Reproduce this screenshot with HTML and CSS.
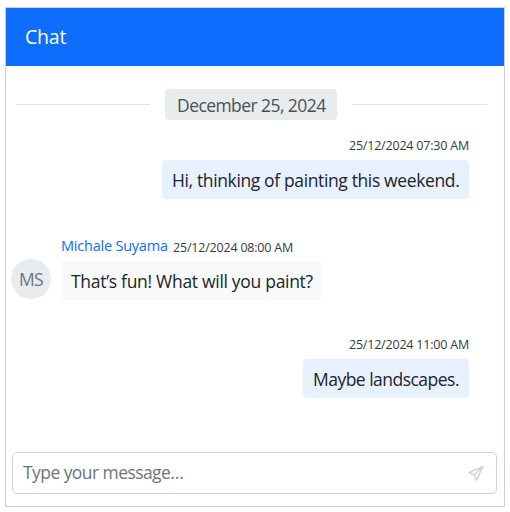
FILE: index.html
```html
<!DOCTYPE html>
<html lang="en">
<head>
<meta charset="utf-8">
<title>Chat</title>
<link rel="stylesheet" href="styles.css">
</head>
<body>
<main class="chat">
  <header class="chat-header"><span class="title">Chat</span></header>
  <section class="messages">
    <div class="date-divider"><span class="date"><span class="date-text">December 25, 2024</span></span></div>
    <article class="message sent">
      <div class="meta"><time class="time">25/12/2024 07:30 AM</time></div>
      <div class="bubble bubble-first"><span class="text-first">Hi, thinking of painting this weekend.</span></div>
    </article>
    <article class="message received">
      <div class="avatar"><span>MS</span></div>
      <div class="content">
        <div class="meta"><span class="name">Michale Suyama</span><time class="time">25/12/2024 08:00 AM</time></div>
        <div class="bubble bubble-reply"><span class="text-reply">That’s fun! What will you paint?</span></div>
      </div>
    </article>
    <article class="message sent">
      <div class="meta"><time class="time">25/12/2024 11:00 AM</time></div>
      <div class="bubble bubble-last"><span class="text-last">Maybe landscapes.</span></div>
    </article>
  </section>
  <footer class="composer">
    <span class="placeholder">Type your message…</span>
    <svg class="send" viewBox="0 0 16 16" width="16" height="16" fill="none" stroke="#ced2d7" stroke-width="1.4" stroke-linejoin="round"><path d="M15 1.5 1 7.7 6.2 9.9 8.6 15.2Z M6.2 9.9 15 1.5"/></svg>
  </footer>
</main>
</body>
</html>
```
FILE: styles.css
```css
* { box-sizing: border-box; }
body {
  margin: 0;
  padding: 7px 5px 5px;
  background: #fff;
  color: #212529;
  font-family: "Open Sans", "Noto Sans", sans-serif;
  font-size: 17.5px;
  line-height: 24px;
  white-space: nowrap;
}
.chat {
  display: flex;
  flex-direction: column;
  width: 500px;
  height: 500px;
  border: 1px solid #ced0da;
}
.chat-header {
  display: flex;
  align-items: center;
  height: 58px;
  padding: 0 19px;
  background: #0d6efd;
  color: #fff;
  font-size: 19.5px;
}
.title { letter-spacing: -0.2px; }
.messages {
  display: flex;
  flex: 1;
  flex-direction: column;
  padding: 23px 17px 0 5px;
}
.date-divider {
  display: flex;
  align-items: center;
  height: 31px;
  margin-left: 5px;
}
.date-divider::before,
.date-divider::after {
  content: "";
  width: 134px;
  height: 1px;
  background: #dee2e6;
}
.date-divider::after { width: 135px; }
.date {
  width: 172px;
  height: 31px;
  margin: 0 15px;
  padding: 4px 12px;
  border-radius: 4px;
  background: #e9ecef;
  color: #495057;
}
.date-text { letter-spacing: -0.57px; }
.message { height: 79px; }
.sent {
  display: flex;
  flex-direction: column;
  align-items: flex-end;
  margin-right: 18px;
}
.sent .meta { height: 40px; padding-top: 14px; }
.received {
  display: flex;
  gap: 10px;
  height: 120px;
  padding-top: 22px;
}
.received .meta {
  display: flex;
  align-items: baseline;
  gap: 5px;
  height: 40px;
  padding-top: 13px;
}
.received .time { margin-bottom: -1px; transform: translateY(1px); }
.avatar {
  display: flex;
  align-items: center;
  justify-content: center;
  width: 40px;
  height: 40px;
  margin-top: 38px;
  border-radius: 50%;
  background: #e9ecef;
  color: #6c757d;
  letter-spacing: -0.6px;
}
.name { width: 107px; color: #0d6efd; font-size: 14.5px; line-height: 24px; letter-spacing: -0.22px; }
.time { display: block; color: #343a40; font-size: 12.5px; line-height: 24px; letter-spacing: -0.2px; }
.bubble {
  height: 39px;
  padding: 8px 10px;
  border-radius: 4px;
  background: #e7f1ff;
}
.bubble-first { width: 307px; }
.bubble-reply { width: 261px; background: #f8f9fa; }
.bubble-last { width: 166px; }
.text-first { letter-spacing: -0.37px; }
.text-reply { letter-spacing: -0.3px; }
.text-last { letter-spacing: -0.52px; }
.composer {
  display: flex;
  align-items: center;
  justify-content: space-between;
  height: 42px;
  margin: 0 7px 12px 6px;
  padding: 0 12px 0 10px;
  border: 1px solid #ced4da;
  border-radius: 5px;
  color: #6c757d;
}
.placeholder { margin-top: -3px; letter-spacing: -0.57px; }
```
